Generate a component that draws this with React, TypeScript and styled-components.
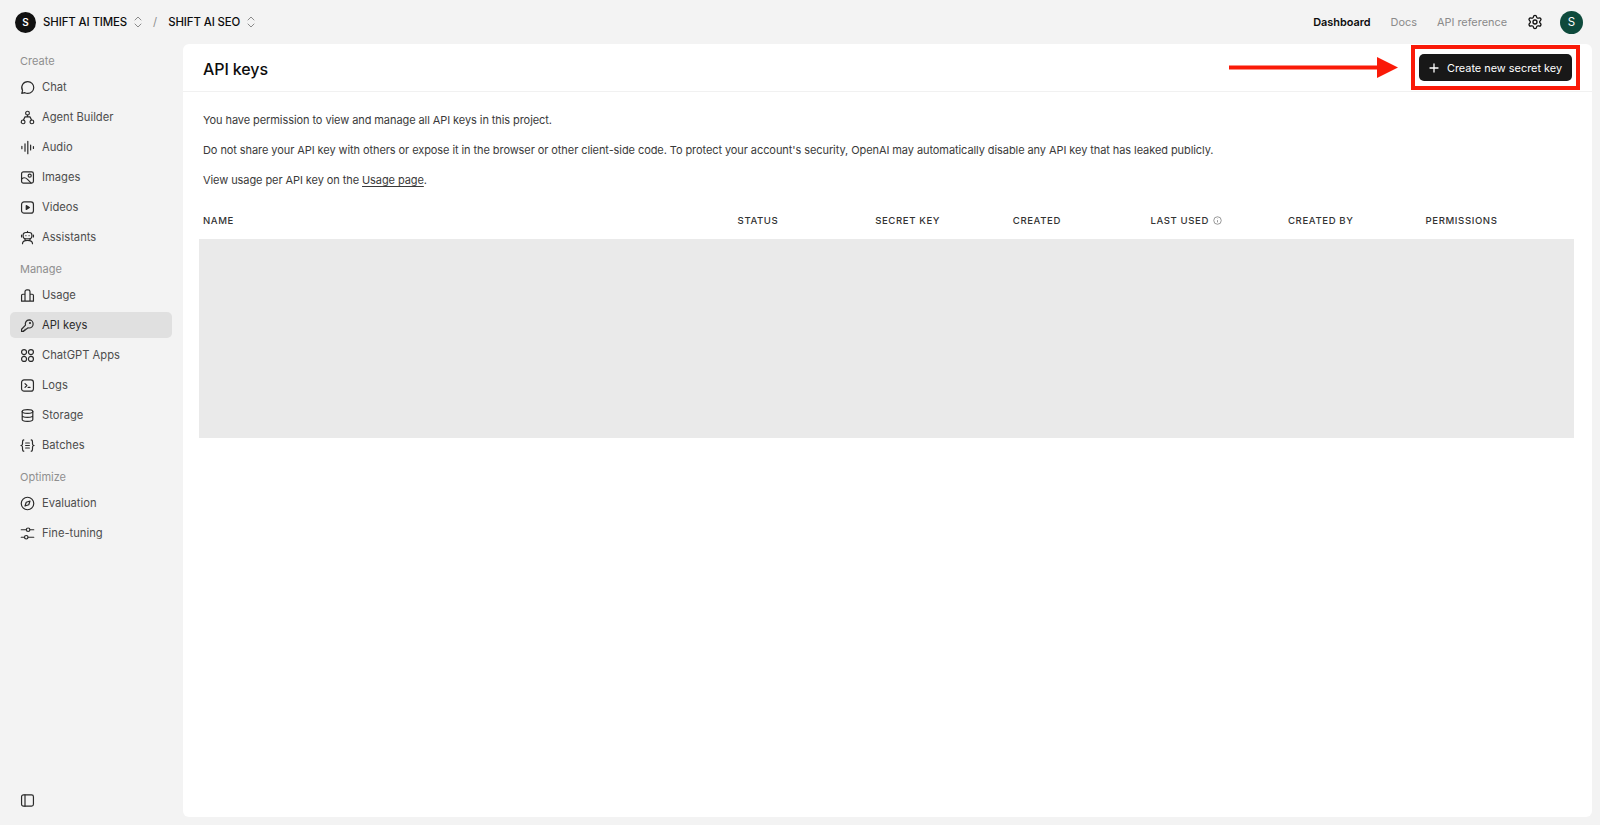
import React from "react";
import styled, { createGlobalStyle } from "styled-components";
import { Settings } from "lucide-react";

const Global = createGlobalStyle`
  html, body { margin: 0; padding: 0; height: 100%; background: #f3f3f3; }
  body { font-family: Inter, "Liberation Sans", sans-serif; color: #0d0d0d; -webkit-font-smoothing: antialiased; }
  #root { height: 100%; }
  * { box-sizing: border-box; }
`;

const Shell = styled.div`
  width: 1600px;
  height: 825px;
  display: flex;
  flex-direction: column;
  background: #f3f3f3;
  overflow: hidden;
`;

const TopBar = styled.header`
  height: 44px;
  flex: none;
  display: flex;
  align-items: center;
  justify-content: space-between;
  padding: 0 17px 0 15px;
`;

const Crumbs = styled.div`
  display: flex;
  align-items: center;
  font-size: 11.4px;
  font-weight: 500;
  letter-spacing: -0.1px;
`;

const OrgBadge = styled.div`
  width: 21px;
  height: 21px;
  border-radius: 50%;
  background: #111;
  color: #fff;
  font-size: 10px;
  font-weight: 600;
  display: flex;
  align-items: center;
  justify-content: center;
  margin-right: 7px;
`;

const Slash = styled.span`
  color: #8f8f8f;
  font-weight: 400;
  margin: 0 11px 0 10px;
`;

const Chevrons = styled.svg`
  width: 10px;
  height: 12px;
  margin-left: 6px;
  color: #8a8a8a;
  flex: none;
`;

const TopNav = styled.nav`
  display: flex;
  align-items: center;
`;

const TopLink = styled.a<{ $active?: boolean }>`
  font-size: 10.9px;
  font-weight: ${(p) => (p.$active ? 600 : 400)};
  color: ${(p) => (p.$active ? "#0d0d0d" : "#8a8a8a")};
  margin-right: 20px;
`;

const GearWrap = styled.div`
  width: 16px;
  height: 16px;
  margin: 0 17px 0 0;
  color: #111;
  display: flex;
`;

const Avatar = styled.div`
  width: 23px;
  height: 23px;
  border-radius: 50%;
  background: #0e4a3c;
  color: #fff;
  font-size: 11.5px;
  display: flex;
  align-items: center;
  justify-content: center;
`;

const Body = styled.div`
  flex: 1;
  display: flex;
  min-height: 0;
`;

const Sidebar = styled.aside`
  width: 183px;
  flex: none;
  padding: 6px 11px 8px 10px;
  display: flex;
  flex-direction: column;
`;

const SectionLabel = styled.div<{ $first?: boolean }>`
  height: 20px;
  line-height: 20px;
  margin: ${(p) => (p.$first ? "1px" : "5px")} 0 3px;
  padding-left: 10px;
  font-size: 11px;
  color: #8f8f8f;
`;

const NavItem = styled.div<{ $active?: boolean }>`
  height: 26px;
  margin-bottom: 4px;
  display: flex;
  align-items: center;
  gap: 7px;
  padding-left: 10px;
  border-radius: 5px;
  font-size: 11.2px;
  color: ${(p) => (p.$active ? "#2b2b2b" : "#4d4d4d")};
  background: ${(p) => (p.$active ? "#e0e0e0" : "transparent")};
`;

const IconBox = styled.svg`
  width: 15px;
  height: 15px;
  flex: none;
  color: #2a2a2a;
  fill: none;
  stroke: currentColor;
  stroke-width: 1.9;
  stroke-linecap: round;
  stroke-linejoin: round;
`;

const Spacer = styled.div`
  flex: 1;
`;

const CollapseRow = styled.div`
  height: 20px;
  margin-bottom: 7px;
  padding-left: 10px;
  display: flex;
  align-items: center;
`;

const Card = styled.main`
  width: 1409px;
  height: 773px;
  background: #fff;
  border-radius: 6px;
  display: flex;
  flex-direction: column;
`;

const CardHeader = styled.div`
  height: 48px;
  flex: none;
  display: flex;
  align-items: center;
  justify-content: space-between;
  padding: 0 20px;
  border-bottom: 1px solid #f1f1f1;
  position: relative;
`;

const Title = styled.h1`
  margin: 2px 0 0;
  font-size: 16px;
  font-weight: 500;
  letter-spacing: -0.1px;
`;

const CreateButton = styled.button`
  height: 27px;
  width: 153px;
  border: 0;
  border-radius: 5px;
  background: #181818;
  color: #fff;
  display: flex;
  align-items: center;
  justify-content: center;
  gap: 8px;
  padding-left: 6px;
  font: 400 10.9px Inter, "Liberation Sans", sans-serif;
`;

const CalloutBox = styled.div`
  position: absolute;
  left: 1228px;
  top: 1px;
  width: 169px;
  height: 45px;
  border: 4px solid #fa1a08;
`;

const Arrow = styled.svg`
  position: absolute;
  left: 1046px;
  top: 13px;
  width: 169px;
  height: 21px;
`;

const ButtonSlot = styled.div`
  position: relative;
  z-index: 1;
`;

const Content = styled.div`
  padding: 21px 18px 0 16px;
`;

const Para = styled.p`
  margin: 0 0 16px;
  padding-left: 4px;
  height: 14px;
  line-height: 14px;
  font-size: 11px;
  letter-spacing: -0.08px;
  color: #3a3a3a;
  white-space: nowrap;
  &:last-of-type { margin-bottom: 14px; }
`;

const UsageLink = styled.a`
  text-decoration: underline;
  text-underline-offset: 2px;
`;

const TableHead = styled.div`
  display: grid;
  grid-template-columns: 534.600px repeat(5, 137.6px) 1fr;
  height: 38px;
  align-items: center;
`;

const HeadCell = styled.div`
  padding-left: 4px;
  font-size: 9.6px;
  font-weight: 500;
  letter-spacing: 0.6px;
  color: #333;
  display: flex;
  align-items: center;
  gap: 4px;
`;

const InfoIcon = styled.svg`
  width: 9px;
  height: 9px;
  color: #777;
  fill: none;
  stroke: currentColor;
  stroke-width: 2;
`;

const Placeholder = styled.div`
  height: 199px;
  background: #eaeaea;
`;

const P = (p: { children: React.ReactNode }) => <IconBox viewBox="0 0 24 24">{p.children}</IconBox>;

const icons: Record<string, React.ReactNode> = {
  chat: <P><path d="M12.500 2.500a9.500 9.500 0 0 1 0 19c-1.700 0-3.300-.4-4.700-1.200L2.800 21.500l1.300-4.700A9.500 9.500 0 0 1 12.500 2.500z" /></P>,
  agent: <P><circle cx="12" cy="5" r="3" /><circle cx="5" cy="19" r="3" /><circle cx="19" cy="19" r="3" /><path d="M12 8v3M12 11H8l-2.500 5M12 11h4l2.500 5" /></P>,
  audio: <P><path d="M3 10v4M8 6v12M12.500 2v20M17 8v8M21.500 10.500v3" /></P>,
  images: <P><rect x="2.500" y="3" width="19" height="18" rx="3" /><circle cx="15.500" cy="9" r="2.500" /><path d="M3 14c3-2.500 6-2 9 1l5.500 5.500" /></P>,
  videos: <P><rect x="2.500" y="3" width="19" height="18" rx="4" /><path d="M10 9l5 3-5 3z" fill="currentColor" /></P>,
  assistants: <P><rect x="5" y="4" width="14" height="10" rx="4" /><path d="M12 4V2M9.500 9h.01M14.500 9h.01M2.500 8v3M21.500 8v3M8 14v2.500h8V14M4 22c0-3.500 3.500-5.500 8-5.500s8 2 8 5.500" /></P>,
  usage: <P><path d="M2.500 21V12a2 2 0 0 1 2-2H8M8 21V6a3 3 0 0 1 3-3h2a3 3 0 0 1 3 3v15M16 10h3.500a2 2 0 0 1 2 2v9M2.500 21h19" /></P>,
  key: <P><path d="M14.500 3a6.500 6.500 0 0 1 0 13c-.7 0-1.400-.1-2-.3L10 18H8v2H6v1.500H2.500V18l6.300-6.500A6.500 6.500 0 0 1 14.500 3z" /><circle cx="16" cy="8" r=".8" /></P>,
  apps: <P><circle cx="6.500" cy="6.500" r="4" /><circle cx="17.500" cy="6.500" r="4" /><circle cx="6.500" cy="17.500" r="4" /><circle cx="17.500" cy="17.500" r="4" /></P>,
  logs: <P><rect x="2.500" y="3" width="19" height="18" rx="4" /><path d="M8 9l3 3-3 3M13 15h3" /></P>,
  storage: <P><ellipse cx="12" cy="5.500" rx="8.500" ry="3" /><path d="M3.500 5.500v13c0 1.700 3.800 3 8.500 3s8.500-1.300 8.500-3v-13M3.500 12c0 1.700 3.800 3 8.500 3s8.500-1.300 8.500-3" /></P>,
  batches: <P><path d="M6 3C4 3 4 5 4 7v2c0 2-2 3-2.500 3C2 12 4 13 4 15v2c0 2 0 4 2 4M18 3c2 0 2 2 2 4v2c0 2 2 3 2.500 3-.5 0-2.500 1-2.500 3v2c0 2 0 4-2 4M9 8h6M9 12h6M9 16h6" /></P>,
  evaluation: <P><circle cx="12" cy="12" r="10" /><path d="M16 8l-2 6-6 2 2-6z" /></P>,
  tuning: <P><circle cx="13" cy="6" r="2.800" /><circle cx="10" cy="18" r="2.800" /><path d="M2 6h8M16 6h6M2 18h5M13 18h9" /></P>,
};

const sections = [
  { label: "Create", items: [["Chat", "chat"], ["Agent Builder", "agent"], ["Audio", "audio"], ["Images", "images"], ["Videos", "videos"], ["Assistants", "assistants"]] },
  { label: "Manage", items: [["Usage", "usage"], ["API keys", "key"], ["ChatGPT Apps", "apps"], ["Logs", "logs"], ["Storage", "storage"], ["Batches", "batches"]] },
  { label: "Optimize", items: [["Evaluation", "evaluation"], ["Fine-tuning", "tuning"]] },
];

const columns = ["NAME", "STATUS", "SECRET KEY", "CREATED", "LAST USED", "CREATED BY", "PERMISSIONS"];

const UpDown = () => (
  <Chevrons viewBox="0 0 10 12" fill="none" stroke="currentColor" strokeWidth="1" strokeLinecap="round" strokeLinejoin="round">
    <path d="M2 4l3-3 3 3M2 8l3 3 3-3" />
  </Chevrons>
);

export default function App() {
  return (
    <Shell>
      <Global />
      <TopBar>
        <Crumbs>
          <OrgBadge>S</OrgBadge>
          SHIFT AI TIMES
          <UpDown />
          <Slash>/</Slash>
          SHIFT AI SEO
          <UpDown />
        </Crumbs>
        <TopNav>
          <TopLink $active>Dashboard</TopLink>
          <TopLink>Docs</TopLink>
          <TopLink>API reference</TopLink>
          <GearWrap>
            <Settings size={16} strokeWidth={2} />
          </GearWrap>
          <Avatar>S</Avatar>
        </TopNav>
      </TopBar>
      <Body>
        <Sidebar>
          {sections.map((s, i) => (
            <React.Fragment key={s.label}>
              <SectionLabel $first={i === 0}>{s.label}</SectionLabel>
              {s.items.map(([name, icon]) => (
                <NavItem key={name} $active={name === "API keys"}>
                  {icons[icon]}
                  {name}
                </NavItem>
              ))}
            </React.Fragment>
          ))}
          <Spacer />
          <CollapseRow>
            <P>
              <rect x="2.500" y="3" width="19" height="18" rx="3" />
              <path d="M8 3v18" />
            </P>
          </CollapseRow>
        </Sidebar>
        <Card>
          <CardHeader>
            <Title>API keys</Title>
            <Arrow viewBox="0 0 169 21">
              <rect x="0" y="8.500" width="150" height="4" fill="#fa1a08" />
              <path d="M148 0l21 10.500-21 10.500z" fill="#fa1a08" />
            </Arrow>
            <CalloutBox />
            <ButtonSlot>
              <CreateButton>
                <svg width="10" height="10" viewBox="0 0 10 10" stroke="#fff" strokeWidth="1.300" strokeLinecap="round">
                  <path d="M5 1v8M1 5h8" />
                </svg>
                Create new secret key
              </CreateButton>
            </ButtonSlot>
          </CardHeader>
          <Content>
            <Para>You have permission to view and manage all API keys in this project.</Para>
            <Para>
              Do not share your API key with others or expose it in the browser or other client-side code. To protect your account's security, OpenAI may automatically disable any API key that has leaked publicly.
            </Para>
            <Para>
              View usage per API key on the <UsageLink>Usage page</UsageLink>.
            </Para>
            <TableHead>
              {columns.map((c) => (
                <HeadCell key={c}>
                  {c}
                  {c === "LAST USED" && (
                    <InfoIcon viewBox="0 0 24 24">
                      <circle cx="12" cy="12" r="10" />
                      <path d="M12 11v6M12 7v1" />
                    </InfoIcon>
                  )}
                </HeadCell>
              ))}
            </TableHead>
            <Placeholder />
          </Content>
        </Card>
      </Body>
    </Shell>
  );
}
